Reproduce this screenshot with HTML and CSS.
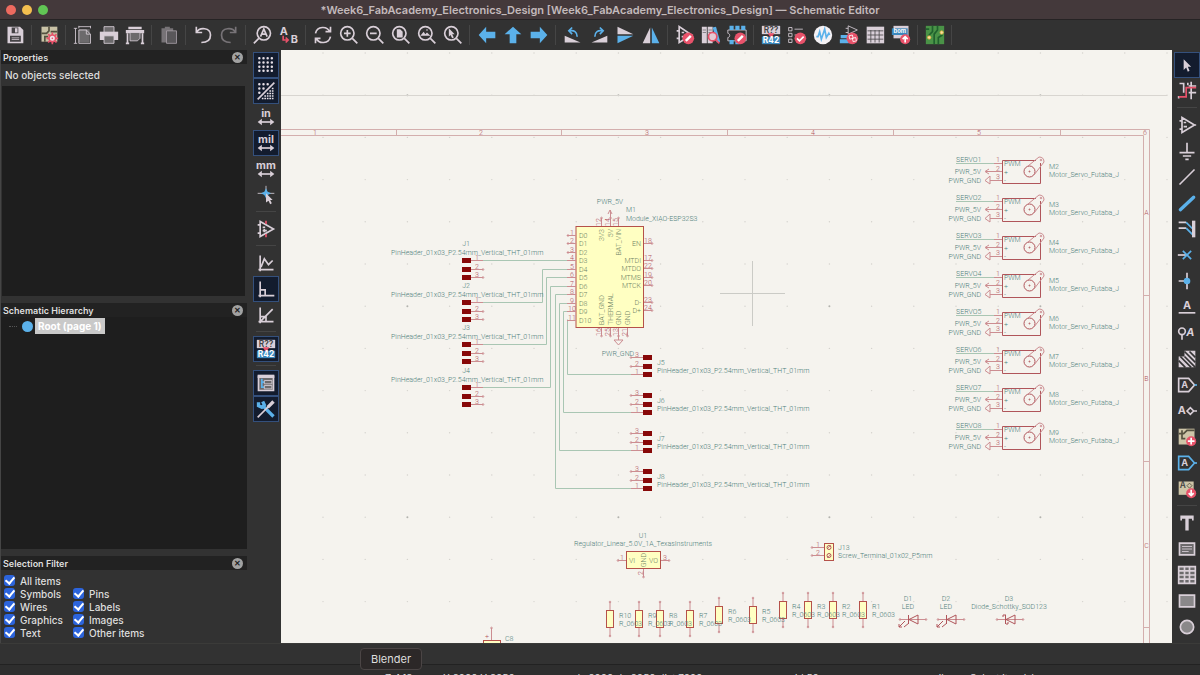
FILE: index.html
```
<!DOCTYPE html>
<html lang="en">
<head>
    <meta charset="UTF-8">
    <meta name="viewport" content="width=device-width, initial-scale=1.0">
    <title>Schematic Editor</title>
    <link rel="stylesheet" href="styles.css">
</head>
<body>
    <header class="titlebar">
        <div class="lights">
            <button class="light close" aria-label="Close"></button>
            <button class="light minimize" aria-label="Minimize"></button>
            <button class="light maximize" aria-label="Maximize"></button>
        </div>
        <h1>*Week6_FabAcademy_Electronics_Design [Week6_FabAcademy_Electronics_Design] — Schematic Editor</h1>
    </header>

    <nav class="toolbar" aria-label="Main toolbar">
        <button class="tool" aria-label="Save"><svg viewBox="0 0 24 24"><path class="fp" d="M3 2h15l4 4v16H3z"/><path class="fd" d="M8 3h8v7H8zM6 13h13v7H6z"/><path class="fp" d="M12 4h3v5h-3zM8 15h9v1H8zM8 17h9v1H8z"/></svg></button>
        <span class="sep"></span>
        <button class="tool" aria-label="Schematic setup"><svg viewBox="0 0 24 24"><path fill="#c9c2a6" d="M3 2h19v18H3z"/><path stroke="#55513f" stroke-width="2" fill="none" d="M3 10h6l3-3V2M14 8h8M7 20v-6h4"/><circle cx="16" cy="16" r="4" fill="#efe4ea" stroke="#e8526a" stroke-width="2"/><path class="sr" d="M16 9v3M16 20v3M9 16h3M20 16h3M11 11l2 2M19 19l2 2M21 11l-2 2M11 21l2-2"/><circle class="fr" cx="16" cy="16" r="1"/></svg></button>
        <span class="sep"></span>
        <button class="tool" aria-label="Page settings"><svg viewBox="0 0 24 24"><path class="fg" d="M7 5h13v16H7z"/><path class="sp thin" d="M3 4v18M1 4h4M1 22h4M7 2h14M7 1v3M21 1v3M7 6h9l5 5v11H7zM16 6v5h5"/></svg></button>
        <button class="tool" aria-label="Print"><svg viewBox="0 0 24 24"><path class="fg sp thin" d="M6 2h12v7H6z"/><path class="fp" d="M1 8h22v10H1z"/><path class="fg sp thin" d="M6 13h12v9H6z"/></svg></button>
        <button class="tool" aria-label="Plot"><svg viewBox="0 0 24 24"><path class="fp" d="M4 2h16v3H4zM1 6h22v4H1z"/><path class="fg sp thin" d="M6 9h12v7l-3 3H6z"/><path class="sp" d="M3 10v12M21 10v12M1 22h4M19 22h4"/></svg></button>
        <span class="sep"></span>
        <button class="tool" aria-label="Paste"><svg viewBox="0 0 24 24"><path fill="#777377" d="M3 4h14v17H3zM7 2h6v4H7z"/><path fill="#59575a" stroke="#a69ea6" d="M9 7h12v15H9z"/></svg></button>
        <span class="sep"></span>
        <button class="tool" aria-label="Undo"><svg viewBox="0 0 24 24"><path class="sp" d="M4 2v7h7M4 9C8 2 21 3 21 12c0 6-4 9-11 9"/></svg></button>
        <button class="tool" aria-label="Redo" disabled><svg viewBox="0 0 24 24"><path stroke="#777377" stroke-width="2" fill="none" d="M20 2v7h-7M20 9C16 2 3 3 3 12c0 6 4 9 11 9"/></svg></button>
        <span class="sep"></span>
        <button class="tool" aria-label="Find"><svg viewBox="0 0 24 24"><circle class="sp" cx="13" cy="10" r="8"/><path class="sp" d="M7 16l-6 6M9 14l4-9 4 9M10 11h6"/></svg></button>
        <button class="tool" aria-label="Find and replace"><svg viewBox="0 0 24 24"><text class="glyph" x="1" y="12">A</text><text class="glyph" x="14" y="22">B</text><path class="sr" d="M5 13v5h5M8 15l3 3-3 3"/></svg></button>
        <span class="sep"></span>
        <button class="tool" aria-label="Refresh"><svg viewBox="0 0 24 24"><path class="sp" d="M3 10c2-9 14-9 17-2M21 2v6h-6M21 14c-2 9-14 9-17 2M3 22v-6h6"/></svg></button>
        <button class="tool" aria-label="Zoom in"><svg viewBox="0 0 24 24"><circle class="sp" cx="10" cy="10" r="8"/><path class="sp" d="M16 16l6 6M6 10h8M10 6v8"/></svg></button>
        <button class="tool" aria-label="Zoom out"><svg viewBox="0 0 24 24"><circle class="sp" cx="10" cy="10" r="8"/><path class="sp" d="M16 16l6 6M6 10h8"/></svg></button>
        <button class="tool" aria-label="Zoom to fit"><svg viewBox="0 0 24 24"><circle class="sp" cx="10" cy="10" r="8"/><path class="sp" d="M16 16l6 6"/><path class="fp" d="M7 5h4l3 3v7H7z"/></svg></button>
        <button class="tool" aria-label="Zoom to objects"><svg viewBox="0 0 24 24"><circle class="sp" cx="10" cy="10" r="8"/><path class="sp" d="M16 16l6 6"/><path class="fp" d="M4 13l4-5 2 3 2-2 4 4z"/><circle class="fp" cx="12" cy="6" r="1"/></svg></button>
        <button class="tool" aria-label="Zoom to selection"><svg viewBox="0 0 24 24"><circle class="sp" cx="10" cy="10" r="8"/><path class="sp" d="M16 16l6 6"/><path class="fp" d="M7 4v10l2-2 2 4 2-1-2-4h3z"/></svg></button>
        <span class="sep"></span>
        <button class="tool" aria-label="Back"><svg viewBox="0 0 24 24"><path class="fb" d="M2 12l9-10v6h11v8H11v6z"/></svg></button>
        <button class="tool" aria-label="Up"><svg viewBox="0 0 24 24"><path class="fb" d="M12 2l10 9h-6v11H8V11H2z"/></svg></button>
        <button class="tool" aria-label="Forward"><svg viewBox="0 0 24 24"><path class="fb" d="M22 12L13 2v6H2v8h11v6z"/></svg></button>
        <span class="sep"></span>
        <button class="tool" aria-label="Rotate left"><svg viewBox="0 0 24 24"><path class="fp" d="M2 13v8h19z"/><path class="sb" d="M8 7c5-1 9 1 9 7M11 3L7 7l4 4"/></svg></button>
        <button class="tool" aria-label="Rotate right"><svg viewBox="0 0 24 24"><path class="fp" d="M22 13v8H3z"/><path class="sb" d="M16 7c-5-1-9 1-9 7M13 3l4 4-4 4"/></svg></button>
        <button class="tool" aria-label="Mirror vertically"><svg viewBox="0 0 24 24"><path class="fp" d="M3 2v9h19z"/><path class="fb" d="M3 22v-9h19z"/></svg></button>
        <button class="tool" aria-label="Mirror horizontally"><svg viewBox="0 0 24 24"><path class="fp" d="M2 22h9V3z"/><path class="fb" d="M22 22h-9V3z"/></svg></button>
        <span class="sep"></span>
        <button class="tool" aria-label="Symbol editor"><svg viewBox="0 0 24 24"><path class="sp" d="M5 2v19l15-9zM2 7h3M2 16h3M8 9h3M8 14h4"/><circle class="fr" cx="16" cy="16" r="7"/><path stroke="#fff" stroke-width="3" d="M13 19l6-6"/></svg></button>
        <button class="tool" aria-label="Symbol library browser"><svg viewBox="0 0 24 24"><path class="fp" d="M1 2h6v20H1zM8 2h6v20H8z"/><path stroke="#777377" d="M2 6h4M2 9h4M9 6h4M9 9h4"/><path class="fb" d="M14 3l4-1 5 18-4 1z"/><circle cx="14" cy="14" r="5" fill="#e3c9d5" stroke="#e8526a" stroke-width="2"/><path class="sr" d="M17 17l5 5"/></svg></button>
        <button class="tool" aria-label="Footprint editor"><svg viewBox="0 0 24 24"><path class="sp thin" d="M1 6h22v13H1v-4c3 0 3-5 0-5z"/><path class="fb" d="M3 1h5v5H3zM10 1h5v5h-5zM17 1h5v5h-5zM3 18h5v5H3zM10 18h5v5h-5z"/><circle class="fr" cx="16" cy="16" r="7"/><path stroke="#fff" stroke-width="3" d="M13 19l6-6"/></svg></button>
        <span class="sep"></span>
        <button class="tool" aria-label="Annotate"><svg viewBox="0 0 24 24"><path class="fp" d="M1 1h22v10H1z"/><path fill="#3b88bd" d="M1 14h22v9H1z"/><path class="fr" d="M8 10h8l-4 6z"/><text class="ref dark" x="12" y="10">R??</text><text class="ref" x="12" y="22">R42</text></svg></button>
        <button class="tool" aria-label="Rules checker"><svg viewBox="0 0 24 24"><path class="sp thin" d="M2 3h4v4H2zM2 10h4v4H2zM2 17h4v4H2zM9 5h10M9 12h4"/><circle class="fr" cx="16" cy="16" r="7"/><path stroke="#fff" stroke-width="2" fill="none" d="M12 16l3 3 5-5"/></svg></button>
        <button class="tool" aria-label="Simulator"><svg viewBox="0 0 24 24"><circle cx="12" cy="12" r="11" fill="#f4f1f4"/><path class="sb" d="M4 14h2l2-6 2 9 4-12 2 10 3-5 1 2"/></svg></button>
        <button class="tool" aria-label="Assign footprints"><svg viewBox="0 0 24 24"><path class="sp thin" d="M11 1v10l11-5zM8 4h3M8 9h3"/><path class="fb" d="M2 12h15v4H2zM1 17h16v5H1z"/><circle class="fr" cx="16" cy="16" r="7"/><path stroke="#fff" fill="none" d="M12 13l4-1 1 4-4 1zM16 16l4-1 1 4-4 1z"/></svg></button>
        <button class="tool" aria-label="Bulk edit fields"><svg viewBox="0 0 24 24"><path class="fp" d="M2 2h21v20H2z"/><path stroke="#4a484a" d="M3 7h19M3 12h19M3 17h19M7 6v15M12 6v15M17 6v15"/></svg></button>
        <button class="tool" aria-label="Export bill of materials"><svg viewBox="0 0 24 24"><path class="fp" d="M3 1h18v15H3z"/><path fill="#3b88bd" d="M1 4h19v8H1z"/><text class="bom" x="3" y="10">bom</text><circle class="fr" cx="17" cy="17" r="6"/><path stroke="#fff" stroke-width="2" fill="none" d="M17 21v-7M14 17l3-3 3 3"/></svg></button>
        <span class="sep"></span>
        <button class="tool" aria-label="Open PCB editor"><svg viewBox="0 0 24 24"><path fill="#4a9347" d="M1 1h22v22H1z"/><path stroke="#20612e" stroke-width="2" fill="none" d="M9 1v7l-4 4v3M15 1v5l-4 5v12M21 12l-5 3v8M1 5h4"/><circle cx="5" cy="15" r="2" fill="#f5e1a0" stroke="#e0ac3c"/><circle cx="20" cy="9" r="2" fill="#f5e1a0" stroke="#e0ac3c"/></svg></button>
        <span class="sep"></span>
    </nav>

    <main class="workspace">
        <aside class="panels">
            <section class="panel properties">
                <div class="panel-head"><h2>Properties</h2><button class="panel-close" aria-label="Close Properties">✕</button></div>
                <p class="caption">No objects selected</p>
                <div class="well"></div>
            </section>
            <section class="panel hierarchy">
                <div class="panel-head"><h2>Schematic Hierarchy</h2><button class="panel-close" aria-label="Close Schematic Hierarchy">✕</button></div>
                <ul class="tree">
                    <li><span class="node"></span><a href="#sheet">Root (page 1)</a></li>
                </ul>
            </section>
            <section class="panel filter">
                <div class="panel-head"><h2>Selection Filter</h2><button class="panel-close" aria-label="Close Selection Filter">✕</button></div>
                <div class="checks">
                    <label class="wide"><input type="checkbox" checked>All items</label>
                    <label><input type="checkbox" checked>Symbols</label>
                    <label><input type="checkbox" checked>Pins</label>
                    <label><input type="checkbox" checked>Wires</label>
                    <label><input type="checkbox" checked>Labels</label>
                    <label><input type="checkbox" checked>Graphics</label>
                    <label><input type="checkbox" checked>Images</label>
                    <label><input type="checkbox" checked>Text</label>
                    <label><input type="checkbox" checked>Other items</label>
                </div>
            </section>
        </aside>

        <nav class="toolbar vertical left" aria-label="Display options">
            <button class="tool on" aria-label="Show grid"><svg viewBox="0 0 24 24"><path class="dots" d="M4 4h18M4 9h18M4 14h18M4 19h18"/></svg></button>
            <button class="tool on" aria-label="Grid overrides"><svg viewBox="0 0 24 24"><path class="dots" d="M4 4h14M4 9h9M4 14h4"/><path class="sp" d="M2 22L22 2"/><path class="minidots" d="M19 9h3M16 12h6M13 15h9M10 18h12M7 21h15"/></svg></button>
            <button class="tool" aria-label="Inches"><svg viewBox="0 0 24 24"><text class="unit" x="12" y="12">in</text><path class="sp" d="M5 18h14"/><path class="fp" d="M2 18l5-4v8zM22 18l-5-4v8z"/></svg></button>
            <button class="tool on" aria-label="Mils"><svg viewBox="0 0 24 24"><text class="unit" x="12" y="12">mil</text><path class="sp" d="M5 18h14"/><path class="fp" d="M2 18l5-4v8zM22 18l-5-4v8z"/></svg></button>
            <button class="tool" aria-label="Millimeters"><svg viewBox="0 0 24 24"><text class="unit" x="12" y="12">mm</text><path class="sp" d="M5 18h14"/><path class="fp" d="M2 18l5-4v8zM22 18l-5-4v8z"/></svg></button>
            <button class="tool" aria-label="Full-window crosshairs"><svg viewBox="0 0 24 24"><path class="sp thin" d="M2 10h20M12 1v12"/><path class="fb" d="M12 4l2 4 4 2-4 2-2 4-2-4-4-2 4-2z"/><path class="fp" d="M12 10v11l3-2 2 4 2-1-2-4h3z"/></svg></button>
            <span class="sep"></span>
            <button class="tool" aria-label="Show hidden pins"><svg viewBox="0 0 24 24"><path class="sp" d="M5 3v18l16-9zM2 7h3M2 17h3M8 10h3M8 14h5M10 12v4"/><path class="sr" d="M12 2v4M12 18v4"/></svg></button>
            <span class="sep"></span>
            <button class="tool" aria-label="Free angle lines"><svg viewBox="0 0 24 24"><path class="sp" d="M5 3v19M3 20h18M6 17l4-10 5 7 5-5"/></svg></button>
            <button class="tool on" aria-label="90 degree lines"><svg viewBox="0 0 24 24"><path class="sp" d="M5 3v19M3 20h19M5 13h6v7"/></svg></button>
            <button class="tool" aria-label="45 degree lines"><svg viewBox="0 0 24 24"><path class="sp" d="M5 3v19M3 20h18M5 20L20 5M5 14h7v6"/></svg></button>
            <span class="sep"></span>
            <button class="tool on" aria-label="Annotate automatically"><svg viewBox="0 0 24 24"><path class="fp" d="M1 1h22v10H1z"/><path fill="#3b88bd" d="M1 14h22v9H1z"/><path class="fr" d="M8 10h8l-4 6z"/><text class="ref dark" x="12" y="10">R??</text><text class="ref" x="12" y="22">R42</text></svg></button>
            <span class="sep"></span>
            <button class="tool on" aria-label="Hierarchy navigator"><svg viewBox="0 0 24 24"><path class="fg sp" d="M3 4h18v17H3z"/><path class="fp" d="M2 2h20v4H2z"/><path class="sb" d="M7 7v11M7 11h3M7 17h3"/><path class="sp thin" d="M10 9h9v4h-9zM10 15h9v4h-9z"/></svg></button>
            <button class="tool on" aria-label="Properties manager"><svg viewBox="0 0 24 24"><path class="sb heavy" d="M8 8l13 13"/><path class="sb heavy" d="M3 4v4l4 2 3-3-2-4"/><path class="sp" d="M2 22L15 9"/><path class="sp heavy" d="M14 10l7-7"/></svg></button>
        </nav>

        <div class="canvas">
            <svg id="sheet" viewBox="281 50 891 593" preserveAspectRatio="xMinYMin slice" role="img" aria-label="Schematic sheet"></svg>
        </div>

        <nav class="toolbar vertical right" aria-label="Drawing tools">
            <button class="tool on" aria-label="Select"><svg viewBox="0 0 24 24"><path class="fp" d="M8 5v13l3-3 2 5 2-1-2-5h4z"/></svg></button>
            <button class="tool" aria-label="Highlight net"><svg viewBox="0 0 24 24"><path class="sp" d="M3 3h5v11M13 2v3M23 6h-9M17 1v21M2 21v-3M23 14h-9"/><path class="sr" d="M2 19h9V8h12"/></svg></button>
            <span class="sep"></span>
            <button class="tool" aria-label="Place symbol"><svg viewBox="0 0 24 24"><path class="sp" d="M6 3v18l15-9zM3 7h3M3 17h3M8 9h3M8 14h4M20 12h3"/></svg></button>
            <button class="tool" aria-label="Place power"><svg viewBox="0 0 24 24"><path class="sp" d="M12 2v12M3 14h18M7 18h10M10 22h4"/></svg></button>
            <button class="tool" aria-label="Draw wire"><svg viewBox="0 0 24 24"><path class="sp" d="M3 21L21 3"/></svg></button>
            <button class="tool" aria-label="Draw bus"><svg viewBox="0 0 24 24"><path class="sb heavy" stroke-linecap="round" d="M4 20L20 5"/></svg></button>
            <button class="tool" aria-label="Wire to bus entry"><svg viewBox="0 0 24 24"><path class="sp" d="M2 4h9M2 11h9"/><path class="sb" d="M11 4l8 8M11 11l8 8"/><path class="sp heavy" d="M20 2v20"/></svg></button>
            <button class="tool" aria-label="No connect"><svg viewBox="0 0 24 24"><path class="sp" d="M1 12h10"/><path class="sb" d="M7 7l10 10M17 7L7 17"/></svg></button>
            <button class="tool" aria-label="Junction"><svg viewBox="0 0 24 24"><path class="sp" d="M2 12h10M12 2v20"/><circle class="fb" cx="12" cy="12" r="4"/></svg></button>
            <button class="tool" aria-label="Net label"><svg viewBox="0 0 24 24"><text class="unit" x="12" y="14">A</text><path class="sp" d="M2 19h20"/></svg></button>
            <button class="tool" aria-label="Net class directive"><svg viewBox="0 0 24 24"><circle class="sp" cx="6" cy="10" r="4"/><path class="sp" d="M6 14v6"/><text class="unit italic" x="16" y="16">A</text></svg></button>
            <button class="tool" aria-label="Rule area"><svg viewBox="0 0 24 24"><path class="fp" d="M2 9h7V2h13v20H2z"/><path stroke="#333" stroke-width="2" d="M9 3l13 13M9 9l13 13M4 9l13 13M2 14l8 8M15 3l7 7"/></svg></button>
            <button class="tool" aria-label="Global label"><svg viewBox="0 0 24 24"><path class="sp" d="M2 4h12l7 8-7 8H2z"/><text class="glyph small" x="5" y="16">A</text><path class="sb" d="M21 12h3"/></svg></button>
            <button class="tool" aria-label="Hierarchical label"><svg viewBox="0 0 24 24"><text class="glyph" x="1" y="16">A</text><path class="sp" d="M12 12l4-4 4 4-4 4zM20 12h4"/></svg></button>
            <button class="tool" aria-label="Place sheet"><svg viewBox="0 0 24 24"><path fill="#cec5a8" d="M2 2h19v19H2z"/><path stroke="#55513f" stroke-width="2" fill="none" d="M2 8h6l4-4h9M6 4v10h4"/><circle class="fr" cx="17" cy="17" r="6"/><path stroke="#fff" stroke-width="2" d="M13 17h8M17 13v8"/></svg></button>
            <button class="tool" aria-label="Import sheet pin"><svg viewBox="0 0 24 24"><path class="sb" d="M2 4h12l7 8-7 8H2z"/><text class="glyph small" x="5" y="16">A</text><path class="sb" d="M21 12h3"/></svg></button>
            <button class="tool" aria-label="Sync sheet pins"><svg viewBox="0 0 24 24"><path fill="#cec5a8" d="M2 3h18v16H2z"/><text class="ref dark" x="7" y="11">A</text><path stroke="#55513f" fill="none" d="M12 8l3-3 3 3-3 3z"/><circle class="fr" cx="17" cy="17" r="6"/><path stroke="#fff" stroke-width="2" fill="none" d="M17 13v7M14 17l3 3 3-3"/></svg></button>
            <span class="sep"></span>
            <button class="tool" aria-label="Text"><svg viewBox="0 0 24 24"><path class="fp" d="M4 3h16v6h-2V7h-4v14h-4V7H6v2H4z"/></svg></button>
            <button class="tool" aria-label="Text box"><svg viewBox="0 0 24 24"><path class="fg sp" d="M3 5h18v14H3z"/><path class="sp thin" d="M6 9h12M6 12h12M6 15h8"/></svg></button>
            <button class="tool" aria-label="Table"><svg viewBox="0 0 24 24"><path class="fg sp" d="M2 2h20v20H2zM2 7h20M2 12h20M2 17h20M9 2v20M15 2v20"/></svg></button>
            <button class="tool" aria-label="Rectangle"><svg viewBox="0 0 24 24"><path fill="#8a888a" class="edge" d="M3 5h18v14H3z"/></svg></button>
            <button class="tool" aria-label="Circle"><svg viewBox="0 0 24 24"><circle fill="#8a888a" class="edge" cx="12" cy="12" r="8"/></svg></button>
        </nav>
    </main>

    <div class="message-panel">
        <div class="tooltip" role="tooltip">Blender</div>
    </div>
    <footer class="statusbar">
        <span>Z 4.18</span>
        <span>X 2900 Y 2050</span>
        <span>dx 2900 dy 2050 dist 7099</span>
        <span>grid 50</span>
        <span>mils</span>
        <span>Select item(s)</span>
    </footer>
    <script src="script.js"></script>
</body>
</html>
```
FILE: styles.css
```
* {
    box-sizing: border-box;
}

body {
    font-family: Inter, "Liberation Sans", sans-serif;
    margin: 0;
    height: 100vh;
    overflow: hidden;
    display: grid;
    grid-template-rows: 20px 30px minmax(0, 1fr) 22px 10px;
    background-color: #323232;
    color: #dedede;
}

button {
    border: 0;
    padding: 0;
    background: none;
    color: inherit;
    font: inherit;
}

h1, h2, p, ul {
    margin: 0;
    padding: 0;
}

/* title bar */
.titlebar {
    display: grid;
    grid-template-columns: 50px 1fr 50px;
    align-items: center;
    background-color: #44393b;
    border-bottom: 1px solid #262324;
}

.titlebar h1 {
    font-size: 11px;
    font-weight: 600;
    color: #c3babb;
    text-align: center;
    white-space: nowrap;
}

.lights {
    display: flex;
    gap: 6px;
    padding-left: 6px;
}

.light {
    width: 10px;
    height: 10px;
    border-radius: 50%;
}

.close { background-color: #ee6a5f; }
.minimize { background-color: #f5bf4f; }
.maximize { background-color: #61c554; }

/* toolbars */
.toolbar {
    display: flex;
    align-items: center;
    padding-left: 2px;
}

.tool {
    flex: none;
    display: flex;
    align-items: center;
    justify-content: center;
    width: 26px;
    height: 26px;
}

.tool svg {
    width: 20px;
    height: 20px;
}

.tool.on {
    background-color: #131c2e;
    border: 1px solid #34507c;
    background-clip: padding-box;
}

.sep {
    flex: none;
    width: 1px;
    height: 20px;
    margin: 0 4px 0 3px;
    background-color: #454545;
}

.toolbar.vertical {
    flex-direction: column;
    padding: 2px 0 0;
}

.toolbar.left {
    padding-left: 4px;
}

.toolbar.right {
    padding-left: 2px;
}

.vertical .sep {
    width: 20px;
    height: 1px;
    margin: 3px 0 4px;
}

.fp { fill: #d9cfd8; }
.fd { fill: #454345; }
.fg { fill: #6c6a6c; }
.fb { fill: #5bb1ea; }
.fr { fill: #e8526a; }
.sp, .sb, .sr, .edge { stroke-width: 2; }
.sp, .edge { stroke: #d9cfd8; }
.sb { stroke: #5bb1ea; }
.sr { stroke: #e8526a; }
.sp:not(.fg), .sb, .sr { fill: none; }
.thin { stroke-width: 1; }
.heavy { stroke-width: 4; }

.dots {
    stroke: #e6dfe6;
    stroke-width: 3;
    stroke-linecap: round;
    stroke-dasharray: 0 5;
}

.minidots {
    stroke: #e6dfe6;
    stroke-width: 2;
    stroke-dasharray: 2 1;
}

.glyph {
    font-size: 13px;
    font-weight: 700;
    fill: #d9cfd8;
}

.glyph.small { font-size: 11px; }

.unit {
    font-size: 13px;
    font-weight: 700;
    fill: #d9cfd8;
    text-anchor: middle;
}

.italic { font-style: italic; }

.ref {
    font-size: 10px;
    font-weight: 700;
    fill: #fff;
    text-anchor: middle;
}

.ref.dark {
    font-weight: 600;
    fill: #444;
}

.bom {
    font-size: 7px;
    font-weight: 700;
    fill: #fff;
}

/* main area */
.workspace {
    display: grid;
    grid-template-columns: 247px 34px minmax(0, 1fr) 28px;
    min-height: 0;
}

.panels {
    display: grid;
    grid-template-rows: 246px minmax(0, 1fr) 87px;
    gap: 7px;
    border-left: 1px solid #454545;
    min-height: 0;
}

.panel {
    display: flex;
    flex-direction: column;
    min-height: 0;
}

.panel-head {
    display: flex;
    align-items: center;
    justify-content: space-between;
    height: 14px;
    padding: 0 4px 0 2px;
    background-color: #222;
}

.panel-head h2 {
    font-size: 9px;
    font-weight: 600;
}

.panel-close {
    display: flex;
    align-items: center;
    justify-content: center;
    width: 11px;
    height: 11px;
    border-radius: 50%;
    background-color: #a2a2a2;
    color: #222;
    font-size: 8px;
    font-weight: 700;
}

.caption {
    font-size: 10px;
    font-weight: 500;
    line-height: 22px;
    padding-left: 4px;
}

.well {
    flex: 1;
    margin: 0 2px 0 1px;
    background-color: #1e1e1e;
}

.tree {
    flex: 1;
    list-style: none;
    background-color: #1e1e1e;
    padding-top: 1px;
}

.tree li {
    display: flex;
    align-items: center;
    padding-left: 8px;
}

.tree li::before {
    content: "";
    width: 8px;
    margin-right: 5px;
    border-top: 1px dotted #555;
}

.node {
    width: 11px;
    height: 11px;
    margin-right: 2px;
    border-radius: 50%;
    background-color: #5bb1ea;
}

.tree a {
    padding: 0 3px;
    font-size: 10px;
    font-weight: 700;
    line-height: 16px;
    background-color: #c9c9c9;
    color: #fff;
    text-decoration: none;
}

.checks {
    display: grid;
    grid-template-columns: 69px 1fr;
    padding: 4px 0 0 3px;
}

.checks label {
    display: flex;
    align-items: center;
    gap: 5px;
    height: 13px;
    font-size: 10px;
    font-weight: 500;
    white-space: nowrap;
}

.checks .wide {
    grid-column: 1 / 3;
}

.checks input {
    appearance: none;
    display: flex;
    align-items: center;
    justify-content: center;
    width: 11px;
    height: 11px;
    margin: 0;
    border-radius: 3px;
    background-color: #2c64dc;
}

.checks input:checked::after {
    content: "";
    width: 4px;
    height: 7px;
    margin-bottom: 2px;
    border: solid #fff;
    border-width: 0 2px 2px 0;
    transform: rotate(40deg);
}

/* schematic */
.canvas {
    background-color: #f5f3ee;
    overflow: hidden;
}

.canvas svg {
    display: block;
    width: 100%;
    height: 100%;
    font-family: Roboto, "Liberation Sans", sans-serif;
    font-size: 7px;
    font-weight: 300;
}

.canvas path, .canvas circle { fill: none; }
.canvas .grid { fill: #d4d2cd; }
.canvas .grid.strong { fill: #b3b3ae; }
.canvas .page { stroke: #d8d5d0; }
.canvas .frame { stroke: #d3aead; }
.canvas .wire { stroke: #a9c6b3; }
.canvas .pin { stroke: #cc8d91; }
.canvas .outline { stroke: #b0555a; }
.canvas .cursor { stroke: #cbcbc6; }
.canvas .body { fill: #ffffc2; stroke: #b5514a; }
.canvas .pad { fill: #870808; }
.canvas text { fill: #4f7f7b; }
.canvas .num { fill: #b0505a; }
.canvas .inner { fill: #6f8365; }

/* bottom bars */
.message-panel {
    position: relative;
    border-top: 1px solid #3b3b39;
    border-bottom: 1px solid #222;
}

.tooltip {
    position: absolute;
    left: 30%;
    top: 4px;
    padding: 0 10px;
    border: 1px solid #4b4545;
    border-radius: 4px;
    background-color: #2c2828;
    font-size: 11px;
    line-height: 20px;
}

.statusbar {
    display: grid;
    grid-template-columns: 58px 131px 211px 145px 40px 1fr;
    padding: 7px 0 0 385px;
    font-size: 10px;
    line-height: 12px;
    white-space: nowrap;
    overflow: hidden;
    background-color: #2e2e2e;
}
```
FILE: script.js
```
const sheet = document.getElementById('sheet');
const parts = [];

const line = (cls, d) => parts.push(`<path class="${cls}" d="${d}"/>`);
const ring = (cls, x, y, r) => parts.push(`<circle class="${cls}" cx="${x}" cy="${y}" r="${r}"/>`);
const box = (cls, x, y, w, h) => parts.push(`<rect class="${cls}" x="${x}" y="${y}" width="${w}" height="${h}"/>`);
// y is the middle of the text
const text = (str, x, y, cls = '', anchor = 'start') =>
    parts.push(`<text class="${cls}" x="${x}" y="${y + 2.5}" text-anchor="${anchor}">${str}</text>`);
const vtext = (str, x, y, cls = '', anchor = 'start') =>
    parts.push(`<text class="${cls}" transform="translate(${x + 2.5} ${y}) rotate(-90)" text-anchor="${anchor}">${str}</text>`);

function drawFrame() {
    for (let i = 0; i < 21; i++) {
        for (let j = 0; j < 15; j++) {
            const strong = i % 5 === 2 && j % 5 === 1;
            ring(strong ? 'grid strong' : 'grid', 323 + i * 42.2, 53 + j * 42.2, strong ? 1 : 0.7);
        }
    }
    line('page', 'M281 95.5H1167');
    line('frame', 'M281 129.5H1149.5V643M281 135.5H1143.5V643');
    [396.5, 561.5, 727.5, 893.5, 1060.5].forEach(x => line('frame', `M${x} 129V136`));
    [295.5, 461.5, 627.5].forEach(y => line('frame', `M1143 ${y}H1150`));
    [315, 481, 647, 813, 979, 1145].forEach((x, i) => text(i + 1, x, 132.5, 'num', 'middle'));
    ['A', 'B', 'C'].forEach((s, i) => text(s, 1146.5, 212 + i * 166.5, 'num', 'middle'));
    line('cursor', 'M720 293.5H785M752.5 261V326');
}

function drawHeaders() {
    for (let i = 0; i < 4; i++) {
        const y = Math.round(260 + i * 42.2);
        text('J' + (i + 1), 466, y - 17, '', 'middle');
        text('PinHeader_01x03_P2.54mm_Vertical_THT_01mm', 391, y - 8);
        for (let n = 0; n < 3; n++) {
            const py = y + Math.round(n * 8.5);
            box('pad', 462, py - 2, 9, 5);
            line('pin', `M471 ${py + 0.5}H483`);
            text(n + 1, 477, py - 3, 'num', 'middle');
            if (n) ring('pin', 483, py + 0.5, 0.8);
        }
    }
    for (let i = 0; i < 4; i++) {
        const y = 357 + i * 38;
        text('J' + (i + 5), 657, y + 5);
        text('PinHeader_01x03_P2.54mm_Vertical_THT_01mm', 657, y + 13);
        for (let n = 0; n < 3; n++) {
            const py = y + Math.round(n * 8.5);
            box('pad', 643, py - 2, 9, 5);
            line('pin', `M631 ${py + 0.5}H643`);
            text(3 - n, 637, py - 3, 'num', 'middle');
            if (n < 2) ring('pin', 631, py + 0.5, 0.8);
        }
    }
}

function drawWires() {
    line('wire', 'M483 260.5H567');
    line('wire', 'M483 302.5H542.5V269.5H567');
    line('wire', 'M483 344.5H546.5V277.5H567');
    line('wire', 'M483 387.5H550.5V286.5H567');
    line('wire', 'M631 488.5H555.5V294.5H567');
    line('wire', 'M631 450.5H559.5V303.5H567');
    line('wire', 'M631 412.5H563.5V311.5H567');
    line('wire', 'M631 374.5H567.5V319.5');
}

function drawModule() {
    box('body', 576, 226.5, 67.5, 101);
    for (let i = 0; i < 11; i++) {
        const y = Math.round(235 + i * 8.45);
        line('pin', `M567 ${y + 0.5}H576`);
        text('D' + i, 579, y + 0.5, 'inner');
        text(i + 1, 572, y - 3, 'num', 'middle');
        if (i < 3) ring('pin', 568, y + 0.5, 0.8);
    }
    [['EN', 18, 243], ['MTDI', 17, 260], ['MTDO', 22, 268], ['MTMS', 19, 277],
     ['MTCK', 20, 285], ['D-', 23, 302], ['D+', 24, 310]].forEach(([name, num, y]) => {
        line('pin', `M644 ${y + 0.5}H652`);
        ring('pin', 652, y + 0.5, 0.8);
        text(name, 641, y + 0.5, 'inner', 'end');
        text(num, 648, y - 3, 'num', 'middle');
    });
    [['3V3', 12, 601], ['5V', 14, 610], ['BAT_VIN', 15, 618]].forEach(([name, num, x]) => {
        line('pin', `M${x + 0.5} 218V226`);
        vtext(name, x + 0.5, 229, 'inner', 'end');
        vtext(num, x - 3, 222, 'num', 'middle');
        ring('pin', x + 0.5, 218, 0.8);
    });
    [['BAT_GND', 16, 601], ['THERMAL', 25, 610], ['GND', 13, 618], ['GND', 21, 627]].forEach(([name, num, x]) => {
        line('pin', `M${x + 0.5} 328V336`);
        vtext(name, x + 0.5, 325, 'inner');
        vtext(num, x - 3, 332, 'num', 'middle');
        ring('pin', x + 0.5, 336, 0.8);
    });
    line('pin', 'M608 214L610 210L612 214M610.5 210V218');
    line('pin', 'M618.5 336V340M614 340H623L618.5 345Z');
    text('PWR_5V', 610, 201.5, '', 'middle');
    text('PWR_GND', 618, 353, '', 'middle');
    text('M1', 626, 209.5);
    text('Module_XIAO-ESP32S3', 626, 218);
}

function drawServos() {
    for (let i = 0; i < 8; i++) {
        const y = 163 + i * 38;
        text('SERVO' + (i + 1), 956, y - 4);
        line('wire', `M956 ${y + 0.5}H994`);
        text('PWR_5V', 981, y + 8.5, '', 'end');
        text('PWR_GND', 981, y + 17, '', 'end');
        line('pin', `M994 ${y + 0.5}H1002M986 ${y + 8.5}H1002M989 ${y + 6}L985 ${y + 8.5}L989 ${y + 11}`);
        line('pin', `M990 ${y + 17.5}H1002M990 ${y + 13}L985 ${y + 17.5}L990 ${y + 21}Z`);
        [1, 2, 3].forEach(n => text(n, 998, y - 12 + n * 8.5, 'num', 'middle'));
        line('outline', `M1036 ${y - 2.5}H1002.5V${y + 20.5}H1040.5V${y}`);
        ring('outline', 1029.5, y + 8.5, 5.5);
        ring('outline', 1029.5, y + 8.5, 0.5);
        line('pin', `M1028 ${y + 3}L1039 ${y - 6}Q1044 ${y - 6} 1044 ${y - 1}L1034 ${y + 12}`);
        ring('pin', 1041, y - 3, 0.8);
        text('PWM', 1004, y + 0.5);
        text('+', 1004, y + 9);
        text('-', 1004, y + 17);
        text('M' + (i + 2), 1049, y + 3.5);
        text('Motor_Servo_Futaba_J', 1049, y + 11.5);
    }
}

function drawResistors() {
    [['R10', 610, 619], ['R9', 639, 619], ['R8', 660, 619], ['R7', 690, 619], ['R6', 719, 615],
     ['R5', 753, 615], ['R4', 783, 610], ['R3', 808, 610], ['R2', 833, 610], ['R1', 863, 610]].forEach(([name, x, y]) => {
        box('body', x - 3.5, y - 8.5, 7, 17);
        line('pin', `M${x} ${y - 17}V${y - 9}M${x} ${y + 9}V${y + 17}`);
        ring('pin', x, y - 17, 0.8);
        ring('pin', x, y + 17, 0.8);
    });
    // labels run over the neighbouring bodies
    [['R10', 619, 619], ['R9', 648, 619], ['R8', 669, 619], ['R7', 699, 619], ['R6', 728, 615],
     ['R5', 762, 615], ['R4', 792, 610], ['R3', 817, 610], ['R2', 842, 610], ['R1', 872, 610]].forEach(([name, x, y]) => {
        text(name, x, y - 4);
        text('R_0603', x, y + 4.5);
    });
}

function drawDiode(x, name, value, labelX) {
    line('pin', `M${x - 13} 619.5H${x + 13}`);
    line('outline', `M${x + 5} 615V624L${x - 4} 619.5ZM${x - 4.5} 615V624`);
    ring('pin', x - 13, 619.5, 0.8);
    ring('pin', x + 13, 619.5, 0.8);
    if (value === 'LED') {
        line('outline', `M${x - 8} 621L${x - 14} 627M${x - 14} 624V627H${x - 11}M${x - 4} 623L${x - 9} 627`);
    } else {
        line('outline', `M${x - 4} 615H${x - 7}V617M${x - 4} 624H${x - 2}V622`);
    }
    text(name, labelX, 598, '', 'middle');
    text(value, labelX, 606, '', 'middle');
}

function drawPower() {
    text('U1', 643, 535, '', 'middle');
    text('Regulator_Linear_5.0V_1A_TexasInstruments', 643, 543, '', 'middle');
    box('body', 626.5, 551.5, 34, 17);
    line('pin', 'M618 560.5H626M661 560.5H669M643.5 569V577');
    ring('pin', 618, 560.5, 0.8);
    ring('pin', 669, 560.5, 0.8);
    ring('pin', 643.5, 577, 0.8);
    text('VI', 629, 560, 'inner');
    text('VO', 658, 560, 'inner', 'end');
    vtext('GND', 643.5, 560, 'inner', 'middle');
    text(1, 622, 557, 'num', 'middle');
    text(3, 665, 557, 'num', 'middle');
    vtext(2, 640, 573, 'num', 'middle');

    box('body', 824.5, 543.5, 9, 17);
    line('pin', 'M812 547.5H824M812 555.5H824M827 549L831 545M827 558L831 554');
    ring('outline', 829, 547.5, 2);
    ring('outline', 829, 555.5, 2);
    ring('pin', 812, 547.5, 0.8);
    ring('pin', 812, 555.5, 0.8);
    text(1, 818, 544, 'num', 'middle');
    text(2, 818, 552, 'num', 'middle');
    text('J13', 838, 547);
    text('Screw_Terminal_01x02_P5mm', 838, 555.5);

    box('body', 483.5, 640.5, 17, 17);
    line('pin', 'M491.5 628V640');
    ring('pin', 491.5, 628, 0.8);
    text('+', 485, 636, 'num');
    text('C8', 505, 638.5);
}

drawFrame();
drawWires();
drawHeaders();
drawModule();
drawServos();
drawPower();
drawResistors();
drawDiode(913, 'D1', 'LED', 908);
drawDiode(951, 'D2', 'LED', 946);
drawDiode(1010, 'D3', 'Diode_Schottky_SOD123', 1009);
sheet.innerHTML = parts.join('');
```
